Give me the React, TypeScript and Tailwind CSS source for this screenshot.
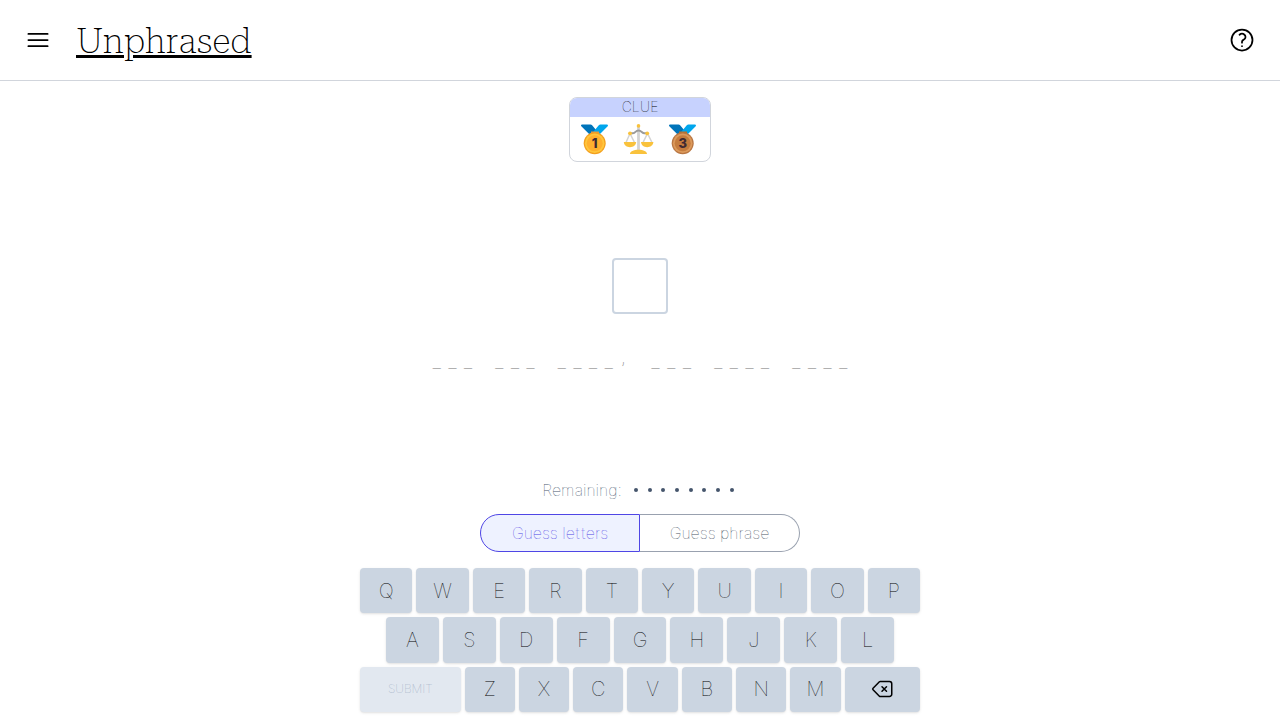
import { HiOutlineBars3, HiOutlineBackspace, HiOutlineQuestionMarkCircle } from "react-icons/hi2";

const phrase = "___ ___ ____, ___ ____ ____";
const remaining = 8;

function Medal({ place }: { place: 1 | 3 }) {
  const gold = place === 1;
  return (
    <svg viewBox="0 0 32 32" className="size-8" role="img" aria-label={gold ? "Gold medal" : "Bronze medal"}>
      <path d="M10.6 11.6 2.3 3.2c-.6-.7-.2-1.700.7-1.700h8.600c.5 0 1 .2 1.300.6l4.600 5.400-2.200 4.100z" fill="#0074BA" />
      <path d="M12 11.600 20 2.100c.3-.4.8-.6 1.300-.6H28c.9 0 1.300 1 .7 1.700L20.500 11.600z" fill="#00A6ED" />
      <rect x="12" y="8.500" width="8" height="3" fill={gold ? "#E19747" : "#B97028"} />
      <circle cx="15.700" cy="20.300" r="11" fill={gold ? "#F3A01F" : "#B97642"} />
      <circle cx="15.700" cy="20.300" r="9.800" fill={gold ? "#FFC63C" : "#DC9A5C"} />
      <circle cx="15.700" cy="20.300" r="8" fill={gold ? "#FFB02E" : "#C57C3E"} />
      <text x="15.700" y="24.600" textAnchor="middle" fontFamily="Inter, sans-serif" fontSize="13" fontWeight="800" fill="#402A32">{place}</text>
    </svg>
  );
}

function Scales() {
  return (
    <svg viewBox="0 0 32 32" className="size-8" role="img" aria-label="Balance scale">
      <path d="M3 19.500 7 10.500 11.500 19.500M20 19.500l4.500-9 4.500 9" fill="none" stroke="#D3D3D3" strokeWidth="1.500" />
      <path d="M15.500 4v24" stroke="#D3D3D3" strokeWidth="2.800" />
      <path d="M7 10.200h3c2.700 0 2.300-2.700 5.500-2.700s3.300 2.700 6 2.700H24.500" fill="none" stroke="#9B9B9B" strokeWidth="2" />
      <path d="M.8 19h12.400c-.3 3.400-3 5.200-6.200 5.200S1.100 22.400.8 19zM18 19h12.400c-.3 3.400-3 5.200-6.200 5.200s-5.900-1.800-6.200-5.200zM7 31c0-2.300 3.500-4.200 8.500-4.200S24 28.700 24 31z" fill="#F9C23C" />
      <circle cx="15.500" cy="2.900" r="1.800" fill="#F9C23C" />
      <circle cx="7" cy="10.300" r="1.900" fill="#F9C23C" />
      <circle cx="24.200" cy="10.300" r="1.900" fill="#F9C23C" />
    </svg>
  );
}

function Key({ letter }: { letter: string }) {
  return (
    <button className="min-w-0 flex-1 rounded bg-[#cbd5e1] text-xl shadow-sm">{letter}</button>
  );
}

function Keyboard() {
  return (
    <div className="grid h-36 w-full max-w-[560px] grid-rows-3 gap-1 font-['Inter',sans-serif]">
      <div className="flex gap-1">
        {[..."QWERTYUIOP"].map((c) => <Key key={c} letter={c} />)}
      </div>
      <div className="flex gap-1 px-[26px]">
        {[..."ASDFGHJKL"].map((c) => <Key key={c} letter={c} />)}
      </div>
      <div className="flex gap-1">
        <button disabled className="min-w-0 flex-2 rounded bg-[#e2e8f0] text-xs text-slate-400 shadow-sm">SUBMIT</button>
        {[..."ZXCVBNM"].map((c) => <Key key={c} letter={c} />)}
        <button aria-label="Backspace" className="flex min-w-0 flex-[1.5] items-center justify-center rounded bg-[#cbd5e1] shadow-sm">
          <HiOutlineBackspace className="size-6" />
        </button>
      </div>
    </div>
  );
}

export default function App() {
  return (
    <div className="flex min-h-screen flex-col bg-white font-['Inter_Tight','Inter',sans-serif] font-thin text-black">
      <header className="flex h-[81px] shrink-0 items-center border-b border-gray-300 px-6">
        <button aria-label="Menu"><HiOutlineBars3 className="size-7" /></button>
        <a href="#" className="ml-6 pt-1 font-['Roboto_Serif',serif] text-[35px] leading-10 underline">Unphrased</a>
        <button aria-label="Help" className="ml-auto"><HiOutlineQuestionMarkCircle className="size-7" /></button>
      </header>
      <main className="flex flex-1 flex-col items-center px-4 pt-4 pb-2">
        <section className="overflow-hidden rounded-lg border border-gray-300">
          <h2 className="-mx-px -mt-px bg-[#c7d2fe] text-center text-sm leading-5">CLUE</h2>
          <div className="flex h-11 items-center gap-3 pr-[11px] pl-[9px]">
            <Medal place={1} />
            <Scales />
            <Medal place={3} />
          </div>
        </section>
        <div className="flex flex-1 flex-col items-center justify-center">
          <input aria-label="Letter guess" maxLength={1} className="size-14 rounded border-2 border-[#cbd5e1] text-center text-3xl outline-none" />
          <div className="mt-7 mb-2 grid w-[422px] grid-cols-27 items-end text-center font-['Roboto_Mono',monospace] text-xl leading-7 text-neutral-500">
            {[...phrase].map((c, i) => <span key={i} className={c === "," ? "pb-1" : ""}>{c}</span>)}
          </div>
        </div>
        <div className="mb-3 flex items-center gap-3 pr-1 text-base text-slate-600">
          <span>Remaining:</span>
          <div className="flex w-[100px] justify-between">
            {Array.from({ length: remaining }, (_, i) => <i key={i} className="size-1 rounded-full bg-slate-600" />)}
          </div>
        </div>
        <div className="mb-4 grid h-[38px] w-full max-w-80 grid-cols-2">
          <button aria-pressed="true" className="rounded-l-full border border-[#4f46e5] bg-[#eef2ff] text-[#4f46e5]">Guess letters</button>
          <button aria-pressed="false" className="rounded-r-full border border-l-0 border-gray-400 text-gray-600">Guess phrase</button>
        </div>
        <Keyboard />
      </main>
    </div>
  );
}
